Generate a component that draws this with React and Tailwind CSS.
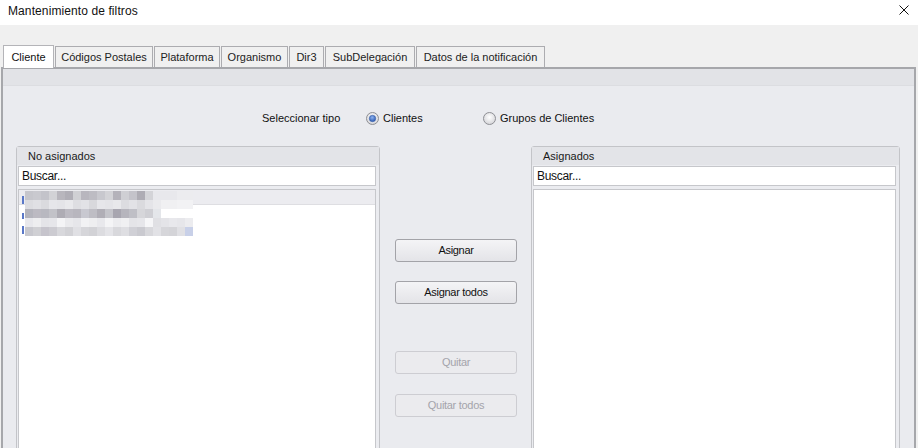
import React from 'react'

const TABS = ['Cliente', 'Códigos Postales', 'Plataforma', 'Organismo', 'Dir3', 'SubDelegación', 'Datos de la notificación']
const TAB_W = [51, 98, 66, 67, 35, 90, 129]

// blurred list rows (pixelated text)
const BLUR = [
  ['c6c6cc','c9c9cf','c3c3ca','d2d2d6','b8b6bd','b0aeb6','d0d0d4','b8b6be','bdbcc3','c8c8ce','d3d3d7','b4b2ba','cfcfd4','c4c3ca','aeacb4','d4d4d8','e8e8ec','e8e8ec','e8e8ec','ececef','ececef'],
  ['dcdce0','e0e0e4','dadade','e6e6ea','e4e4e8','e9e9ec','dedee2','e2e2e6','d8d8dc','e6e6ea','e4e4e8','e8e8eb','dcdce0','e2e2e6','dadade','e4e4e8','eaeaed','f0f0f2','f0f0f2','f2f2f4','f2f2f4'],
  ['b4b4bc','bcbac2','b8b8c0','c2c2c8','aeacb4','bcbac2','b8b6be','c8c8d0','bebdc4','b0aeb6','c4c4ca','a8a6b0','b6b5bd','bfbfc6','d6d6da','cfcfd4','e4e6ea'],
  ['e8e8ec','eeeef0','e4e4e8','e6e6ea','f4f4f6','eaeaed','e6e6ea','f2f2f4','eeeef0','e8e8ec','f4f4f6','ececef','f0f0f2','e4e4e8','e6e6ea','f6f6f8','e0e0e4','e4e4e8','e8e8ec','e6e6ea','ececef'],
  ['c8c8ce','d0d0d4','c6c4cc','cccbd1','d8d8dc','d2d2d6','e0e0e4','d6d6da','d2d2d6','dcdce0','e4e4e8','d8d8dc','dedee2','d0d0d6','cacad0','d8d8dc','e2e2e6','d6d6da','d4d4d8','e0e0e4','c8d0e8'],
]

function Radio({ checked }) {
  return (
    <svg width="13" height="13" viewBox="0 0 13 13" className="shrink-0">
      <defs>
        <radialGradient id={checked ? 'rc' : 'ru'} cx="50%" cy="40%" r="60%">
          <stop offset="0%" stopColor="#ffffff" />
          <stop offset="100%" stopColor="#d4d4d8" />
        </radialGradient>
        <radialGradient id="dot" cx="45%" cy="35%" r="65%">
          <stop offset="0%" stopColor="#8fb4f0" />
          <stop offset="100%" stopColor="#2a58b0" />
        </radialGradient>
      </defs>
      <circle cx="6.5" cy="6.5" r="6" fill={`url(#${checked ? 'rc' : 'ru'})`} stroke="#8e8f94" strokeWidth="1" />
      {checked && <circle cx="6.5" cy="6.5" r="3.2" fill="url(#dot)" stroke="#3a5fa8" strokeWidth="0.6" />}
    </svg>
  )
}

function Btn({ children, disabled }) {
  return (
    <button
      className={`w-[122px] h-[23px] rounded-[3px] border text-[11px] tracking-[-0.3px] flex items-center justify-center ${
        disabled
          ? 'border-[#cdcdd2] bg-[#ebebee] text-[#a4a4ab]'
          : 'border-[#a3a3a8] bg-gradient-to-b from-[#f4f4f6] to-[#e4e4e8] text-[#111]'
      }`}>
      {children}
    </button>
  )
}

function GroupBox({ title, width, children }) {
  return (
    <div className={`${width} shrink-0 flex flex-col border border-[#c3c4c8] rounded-t-[3px] bg-[#ebecf0]`}>
      <div className="h-[18px] bg-[#e3e4e8] pl-[11px] flex items-center text-[11px] text-[#1a1a1a] leading-none">{title}</div>
      <div className="ml-[1px] mr-[3px] mt-[1px] h-[20px] bg-white border border-[#c6c7cb] flex items-center pl-[3px] text-[12px] tracking-[-0.3px] text-[#111]">
        Buscar...
      </div>
      <div className="ml-[1px] mr-[3px] mt-[3px] h-[300px] bg-white border border-[#c6c7cb] relative">
        {children}
      </div>
    </div>
  )
}

export default function App() {
  return (
    <div className="w-[918px] h-[448px] overflow-hidden bg-[#f0f0f0] font-['Liberation_Sans',Arial,sans-serif] text-[#111]">
      {/* title bar */}
      <div className="h-[25px] bg-white flex items-center justify-between pl-[8px] pr-[9px] pb-[3px]">
        <span className="text-[12px] tracking-[0.1px]">Mantenimiento de filtros</span>
        <svg width="10" height="10" viewBox="0 0 10 10" className="mb-[2px]">
          <path d="M0.5 0.5 L9.5 9.5 M9.5 0.5 L0.5 9.5" stroke="#111" strokeWidth="1" />
        </svg>
      </div>

      {/* tabs */}
      <div className="mt-[20px] h-[22px] flex items-end pl-[3px] gap-[1px] relative z-10">
        {TABS.map((t, i) =>
          i === 0 ? (
            <div key={t} style={{ width: TAB_W[i] }}
              className="h-[23px] -mb-px bg-white border border-b-0 border-[#b4b4b8] flex items-center justify-center text-[11px]">
              {t}
            </div>
          ) : (
            <div key={t} style={{ width: TAB_W[i] }}
              className="h-[21px] bg-[#f0f0f0] border border-b-0 border-[#acacb0] flex items-center justify-center text-[11px] text-[#222]">
              {t}
            </div>
          )
        )}
      </div>

      {/* tab panel */}
      <div className="ml-[1px] w-[915px] h-[400px] border-2 border-b-0 border-[#a6a7ab] bg-[#eaebef]">
        <div className="h-[17px] bg-[#e2e3e7] border-b border-[#dcdde1]" />

        <div className="pt-[24px] pl-[259px] h-[16px] box-content flex items-center text-[11px]">
          <span className="w-[104px]">Seleccionar tipo</span>
          <div className="w-[117px] flex items-center gap-[4px]">
            <Radio checked />
            <span>Clientes</span>
          </div>
          <div className="flex items-center gap-[4px]">
            <Radio />
            <span>Grupos de Clientes</span>
          </div>
        </div>

        <div className="mt-[20px] pl-[13px] flex">
          <GroupBox title="No asignados" width="w-[364px]">
            <div className="h-[15px] bg-[#ececf0] border-b border-[#dedee2]" />
            <div className="absolute left-[6px] top-[1px] flex flex-col">
              {BLUR.map((row, r) => (
                <div key={r} className="flex h-[9px]">
                  {row.map((c, k) => (
                    <div key={k} className="w-[8px] h-[9px]" style={{ backgroundColor: '#' + c }} />
                  ))}
                </div>
              ))}
            </div>
            <div className="absolute left-[3px] top-[6px] w-[2px] h-[8px] bg-[#5a78c8]" />
            <div className="absolute left-[3px] top-[23px] w-[2px] h-[6px] bg-[#5a78c8]" />
            <div className="absolute left-[3px] top-[36px] w-[2px] h-[8px] bg-[#5a78c8]" />
          </GroupBox>

          <div className="w-[151px] shrink-0 pl-[15px] pt-[93px] flex flex-col">
            <Btn>Asignar</Btn>
            <div className="h-[19px]" />
            <Btn>Asignar todos</Btn>
            <div className="h-[47px]" />
            <Btn disabled>Quitar</Btn>
            <div className="h-[20px]" />
            <Btn disabled>Quitar todos</Btn>
          </div>

          <GroupBox title="Asignados" width="w-[369px]" />
        </div>
      </div>
    </div>
  )
}
